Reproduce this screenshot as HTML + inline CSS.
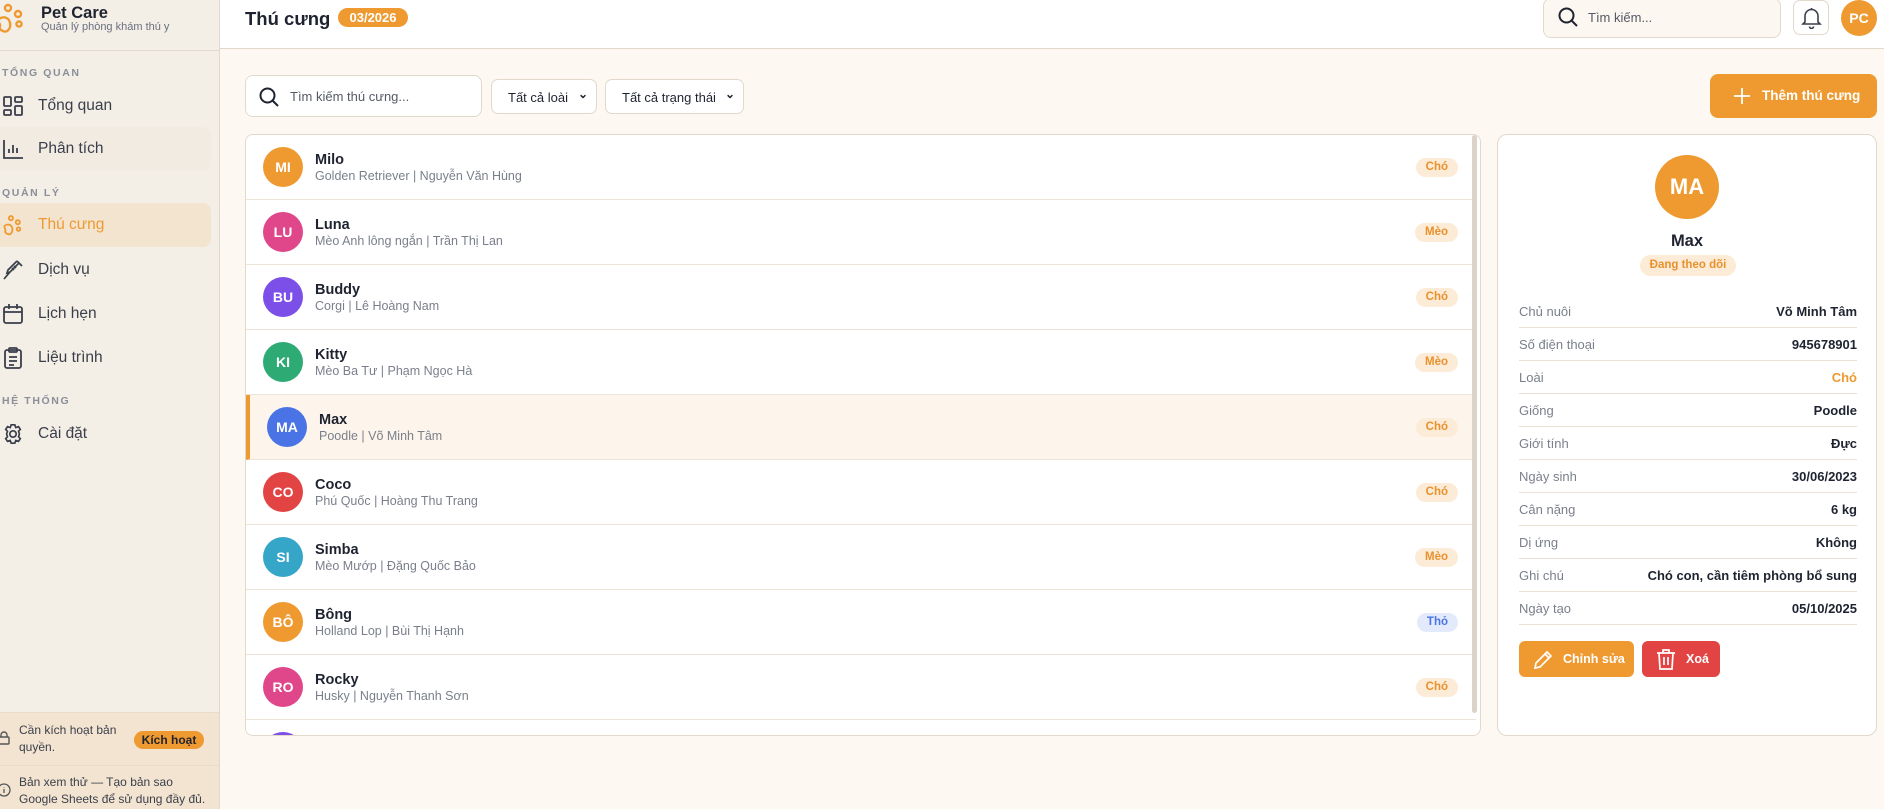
<!DOCTYPE html>
<html><head><meta charset="utf-8">
<style>
*{box-sizing:border-box;margin:0;padding:0}
body{width:1884px;height:809px;overflow:hidden;font-family:"Liberation Sans","Noto Sans CJK SC",sans-serif;background:#fdf8f2;position:relative;color:#1f2330}
.abs{position:absolute}
#side{left:0;top:0;width:220px;height:809px;background:#f3eee6;border-right:1px solid #e2d9cc}
.sec{position:absolute;left:2px;font-size:10.5px;font-weight:bold;letter-spacing:1.6px;color:#8a8f99}
.nav{position:absolute;left:0;width:211px;height:44px;border-radius:0 8px 8px 0;display:flex;align-items:center;font-size:15.5px;color:#3a3f4b}
.nav svg{margin-left:2px;margin-right:14px}
#hdr{left:220px;top:0;width:1664px;height:49px;background:#fff;border-bottom:1px solid #e2d9cc}
.row{position:absolute;left:0;width:1230px;height:65px;border-bottom:1px solid #ece4d7;background:#fff}
.av{position:absolute;left:17px;top:12px;width:40px;height:40px;border-radius:50%;color:#fff;font-weight:bold;font-size:14px;display:flex;align-items:center;justify-content:center}
.nm{position:absolute;left:69px;top:17px;font-size:14.5px;font-weight:bold;color:#1f2330}
.sb{position:absolute;left:69px;top:34px;font-size:12.5px;color:#7a7f8b}
.bd{position:absolute;right:18px;top:23px;height:19px;padding:0 10px;border-radius:10px;background:#fcebd6;color:#e8912d;font-size:11.5px;font-weight:bold;line-height:19px}
.dr{position:absolute;left:21px;width:338px;height:33px;border-bottom:1px solid #e9e1d4;font-size:13px}
.dr .l{position:absolute;left:0;top:9px;color:#7a7f8b}
.dr .v{position:absolute;right:0;top:9px;font-weight:bold;color:#1f2330}
</style></head><body>
<div id="side" class="abs">
  <svg class="abs" style="left:-4px;top:3px" width="32" height="32" viewBox="0 0 32 32" fill="none" stroke="#ee9a31" stroke-width="2.4"><circle cx="12" cy="5" r="3"/><circle cx="22" cy="11" r="3"/><circle cx="23" cy="21" r="2.6"/><path d="M3 16c4-3 10-2 11 4 1 6-3 10-7 8-3-1-4-3-3-5 1-2-3-4-1-7z"/></svg>
  <div class="abs" style="left:41px;top:4px;font-size:16.5px;font-weight:bold;color:#1f2330">Pet Care</div>
  <div class="abs" style="left:41px;top:21px;font-size:11px;color:#6b7080">Quản lý phòng khám thú y</div>
  <div class="abs" style="left:0;top:50px;width:220px;border-top:1px solid #e2d9cc"></div>
  <div class="sec" style="top:67px">TỔNG QUAN</div>
  <div class="nav" style="top:84px"><svg width="22" height="22" viewBox="0 0 22 22" fill="none" stroke="#3a3f4b" stroke-width="1.8"><rect x="2" y="2" width="7" height="9" rx="1"/><rect x="13" y="2" width="7" height="5" rx="1"/><rect x="2" y="15" width="7" height="5" rx="1"/><rect x="13" y="11" width="7" height="9" rx="1"/></svg>Tổng quan</div>
  <div class="nav" style="top:127px;background:#f1ebe2"><svg width="22" height="22" viewBox="0 0 22 22" fill="none" stroke="#3a3f4b" stroke-width="1.8"><path d="M2 2v18h19M7 15v-4M11 15V7M15 15v-5"/></svg>Phân tích</div>
  <div class="sec" style="top:187px">QUẢN LÝ</div>
  <div class="nav" style="top:203px;background:#f3e4cf;color:#ee9a31"><svg width="22" height="22" viewBox="0 0 32 32" fill="none" stroke="#ee9a31" stroke-width="2.6"><circle cx="13" cy="6" r="3"/><circle cx="23" cy="12" r="3"/><circle cx="24" cy="22" r="2.6"/><path d="M4 17c4-3 10-2 11 4 1 6-3 10-7 8-3-1-4-3-3-5 1-2-3-4-1-7z"/></svg>Thú cưng</div>
  <div class="nav" style="top:248px"><svg width="22" height="22" viewBox="0 0 22 22" fill="none" stroke="#3a3f4b" stroke-width="1.7"><path d="M15 2l5 5M17 4l-9 9-3 1 1-3 9-9M8 13l-6 7M10 9l2 2M12 7l2 2"/></svg>Dịch vụ</div>
  <div class="nav" style="top:292px"><svg width="22" height="22" viewBox="0 0 22 22" fill="none" stroke="#3a3f4b" stroke-width="1.8"><rect x="2" y="4" width="18" height="16" rx="2"/><path d="M2 9h18M7 1v5M15 1v5"/></svg>Lịch hẹn</div>
  <div class="nav" style="top:336px"><svg width="22" height="22" viewBox="0 0 22 22" fill="none" stroke="#3a3f4b" stroke-width="1.8"><rect x="3" y="3" width="16" height="18" rx="2"/><rect x="7" y="1" width="8" height="4" rx="1"/><path d="M7 10h8M7 14h8M7 18h5"/></svg>Liệu trình</div>
  <div class="sec" style="top:395px">HỆ THỐNG</div>
  <div class="nav" style="top:412px"><svg width="22" height="22" viewBox="0 0 24 24" fill="none" stroke="#3a3f4b" stroke-width="1.8"><circle cx="12" cy="12" r="3.5"/><path d="M10 2h4l1 3 3-1 2 3-2 2 1 3-1 3 2 2-2 3-3-1-1 3h-4l-1-3-3 1-2-3 2-2-1-3 1-3-2-2 2-3 3 1z"/></svg>Cài đặt</div>
  <div class="abs" style="left:0;top:712px;width:219px;height:53px;background:#f2e4d0;border-top:1px solid #e8dccb">
    <svg class="abs" style="left:-3px;top:18px" width="14" height="14" viewBox="0 0 14 14" fill="none" stroke="#555" stroke-width="1.4"><rect x="2" y="6" width="10" height="7" rx="1"/><path d="M4 6V4a3 3 0 016 0v2"/></svg>
    <div class="abs" style="left:19px;top:9px;font-size:12px;line-height:17px;color:#3a3f4b">Cần kích hoạt bản<br>quyền.</div>
    <div class="abs" style="left:134px;top:18px;width:70px;height:18px;border-radius:9px;background:#ee9a31;font-size:12px;font-weight:bold;text-align:center;line-height:18px;color:#1f2330">Kích hoạt</div>
  </div>
  <div class="abs" style="left:0;top:765px;width:219px;height:44px;background:#f2e4d0;border-top:1px solid #e8dccb">
    <svg class="abs" style="left:-3px;top:17px" width="14" height="14" viewBox="0 0 14 14" fill="none" stroke="#555" stroke-width="1.3"><circle cx="7" cy="7" r="6"/><path d="M7 6v4M7 4v.5"/></svg>
    <div class="abs" style="left:19px;top:8px;font-size:12px;line-height:17px;color:#3a3f4b">Bản xem thử — Tạo bản sao<br>Google Sheets để sử dụng đầy đủ.</div>
  </div>
</div>

<div id="hdr" class="abs">
  <div class="abs" style="left:25px;top:8px;font-size:18.5px;font-weight:bold">Thú cưng</div>
  <div class="abs" style="left:118px;top:8px;width:70px;height:19px;border-radius:10px;background:#ee9a31;color:#fff;font-size:13px;font-weight:bold;text-align:center;line-height:19px">03/2026</div>
  <div class="abs" style="left:1323px;top:-2px;width:238px;height:40px;border:1px solid #e2d9cc;border-radius:8px;background:#fcf7f0">
    <svg class="abs" style="left:13px;top:7px" width="22" height="22" viewBox="0 0 22 22" fill="none" stroke="#1f2330" stroke-width="2"><circle cx="9.5" cy="9.5" r="7"/><path d="M15 15l5 5"/></svg>
    <div class="abs" style="left:44px;top:11px;font-size:13px;color:#555a66">Tìm kiếm...</div>
  </div>
  <div class="abs" style="left:1573px;top:0;width:36px;height:35px;border:1px solid #e2d9cc;border-radius:7px;background:#fff">
    <svg class="abs" style="left:7px;top:6px" width="21" height="22" viewBox="0 0 21 22" fill="none" stroke="#3a3f4b" stroke-width="1.6"><path d="M4 15V9a6.5 6.5 0 0113 0v6l2 2H2zM8.5 19.5a2 2 0 004 0M10.5 1v1.5"/></svg>
  </div>
  <div class="abs" style="left:1621px;top:0;width:36px;height:36px;border-radius:50%;background:#ee9a31;color:#fff;font-weight:bold;font-size:14px;text-align:center;line-height:36px">PC</div>
</div>

<div class="abs" style="left:245px;top:75px;width:237px;height:42px;border:1px solid #e2d9cc;border-radius:8px;background:#fff">
  <svg class="abs" style="left:12px;top:10px" width="22" height="22" viewBox="0 0 22 22" fill="none" stroke="#1f2330" stroke-width="2"><circle cx="9.5" cy="9.5" r="7"/><path d="M15 15l5 5"/></svg>
  <div class="abs" style="left:44px;top:13px;font-size:13px;color:#555a66">Tìm kiếm thú cưng...</div>
</div>
<div class="abs" style="left:491px;top:79px;width:106px;height:35px;border:1px solid #e2d9cc;border-radius:7px;background:#fff;font-size:13px;padding:10px 0 0 16px">Tất cả loài<span class="abs" style="right:8px;top:7px;font-size:12px;font-weight:bold">⌄</span></div>
<div class="abs" style="left:605px;top:79px;width:139px;height:35px;border:1px solid #e2d9cc;border-radius:7px;background:#fff;font-size:13px;padding:10px 0 0 16px">Tất cả trạng thái<span class="abs" style="right:8px;top:7px;font-size:12px;font-weight:bold">⌄</span></div>
<div class="abs" style="left:1710px;top:74px;width:167px;height:44px;border-radius:8px;background:#ee9a31;color:#fff;font-size:13.5px;font-weight:bold">
  <svg class="abs" style="left:24px;top:14px" width="16" height="16" viewBox="0 0 16 16" stroke="#fff" stroke-width="1.8"><path d="M8 0v16M0 8h16"/></svg>
  <div class="abs" style="left:52px;top:14px">Thêm thú cưng</div>
</div>

<div class="abs" style="left:245px;top:134px;width:1236px;height:602px;border:1px solid #e2d9cc;border-radius:8px;background:#fff;overflow:hidden">
  <div class="row" style="top:0"><div class="av" style="background:#ee9a31">MI</div><div class="nm">Milo</div><div class="sb">Golden Retriever | Nguyễn Văn Hùng</div><div class="bd">Chó</div></div>
  <div class="row" style="top:65px"><div class="av" style="background:#e0478a">LU</div><div class="nm">Luna</div><div class="sb">Mèo Anh lông ngắn | Trần Thị Lan</div><div class="bd">Mèo</div></div>
  <div class="row" style="top:130px"><div class="av" style="background:#7c4fe8">BU</div><div class="nm">Buddy</div><div class="sb">Corgi | Lê Hoàng Nam</div><div class="bd">Chó</div></div>
  <div class="row" style="top:195px"><div class="av" style="background:#2eab74">KI</div><div class="nm">Kitty</div><div class="sb">Mèo Ba Tư | Phạm Ngọc Hà</div><div class="bd">Mèo</div></div>
  <div class="row" style="top:260px;background:#fdf5ec;border-left:4px solid #ee9a31"><div class="av" style="background:#4a74e6">MA</div><div class="nm">Max</div><div class="sb">Poodle | Võ Minh Tâm</div><div class="bd">Chó</div></div>
  <div class="row" style="top:325px"><div class="av" style="background:#e24343">CO</div><div class="nm">Coco</div><div class="sb">Phú Quốc | Hoàng Thu Trang</div><div class="bd">Chó</div></div>
  <div class="row" style="top:390px"><div class="av" style="background:#35a5c8">SI</div><div class="nm">Simba</div><div class="sb">Mèo Mướp | Đặng Quốc Bảo</div><div class="bd">Mèo</div></div>
  <div class="row" style="top:455px"><div class="av" style="background:#ee9a31">BÔ</div><div class="nm">Bông</div><div class="sb">Holland Lop | Bùi Thị Hạnh</div><div class="bd" style="background:#e2eafc;color:#4a74e6">Thỏ</div></div>
  <div class="row" style="top:520px"><div class="av" style="background:#e0478a">RO</div><div class="nm">Rocky</div><div class="sb">Husky | Nguyễn Thanh Sơn</div><div class="bd">Chó</div></div>
  <div class="row" style="top:585px;border:none"><div class="av" style="background:#7c4fe8"></div></div>
  <div class="abs" style="left:1226px;top:0;width:5px;height:578px;border-radius:3px;background:#dbd3c7"></div>
</div>

<div class="abs" style="left:1497px;top:134px;width:380px;height:602px;border:1px solid #e2d9cc;border-radius:10px;background:#fff">
  <div class="abs" style="left:157px;top:20px;width:64px;height:64px;border-radius:50%;background:#ee9a31;color:#fff;font-weight:bold;font-size:22px;text-align:center;line-height:64px">MA</div>
  <div class="abs" style="left:0;width:378px;top:97px;text-align:center;font-size:16.5px;font-weight:bold">Max</div>
  <div class="abs" style="left:142px;top:120px;width:96px;height:21px;border-radius:11px;background:#fcebd6;color:#e8912d;font-size:11.5px;font-weight:bold;text-align:center;line-height:21px">Đang theo dõi</div>
  <div class="dr" style="top:160px"><span class="l">Chủ nuôi</span><span class="v">Võ Minh Tâm</span></div>
  <div class="dr" style="top:193px"><span class="l">Số điện thoại</span><span class="v">945678901</span></div>
  <div class="dr" style="top:226px"><span class="l">Loài</span><span class="v" style="color:#ee9a31">Chó</span></div>
  <div class="dr" style="top:259px"><span class="l">Giống</span><span class="v">Poodle</span></div>
  <div class="dr" style="top:292px"><span class="l">Giới tính</span><span class="v">Đực</span></div>
  <div class="dr" style="top:325px"><span class="l">Ngày sinh</span><span class="v">30/06/2023</span></div>
  <div class="dr" style="top:358px"><span class="l">Cân nặng</span><span class="v">6 kg</span></div>
  <div class="dr" style="top:391px"><span class="l">Dị ứng</span><span class="v">Không</span></div>
  <div class="dr" style="top:424px"><span class="l">Ghi chú</span><span class="v">Chó con, cần tiêm phòng bổ sung</span></div>
  <div class="dr" style="top:457px"><span class="l">Ngày tạo</span><span class="v">05/10/2025</span></div>
  <div class="abs" style="left:21px;top:506px;width:115px;height:36px;border-radius:6px;background:#ee9a31;color:#fff;font-size:12.5px;font-weight:bold">
    <svg class="abs" style="left:13px;top:8px" width="22" height="22" viewBox="0 0 22 22" fill="none" stroke="#fff" stroke-width="1.7"><path d="M3 19l1-5L15 3l4 4L8 18zM13 5l4 4"/></svg>
    <div class="abs" style="left:44px;top:11px">Chỉnh sửa</div>
  </div>
  <div class="abs" style="left:144px;top:506px;width:78px;height:36px;border-radius:6px;background:#e24343;color:#fff;font-size:12.5px;font-weight:bold">
    <svg class="abs" style="left:14px;top:7px" width="20" height="22" viewBox="0 0 20 22" fill="none" stroke="#fff" stroke-width="1.7"><path d="M1 5h18M7 5V2h6v3M3 5l1 16h12l1-16M8 9v8M12 9v8"/></svg>
    <div class="abs" style="left:44px;top:11px">Xoá</div>
  </div>
</div>
</body></html>
